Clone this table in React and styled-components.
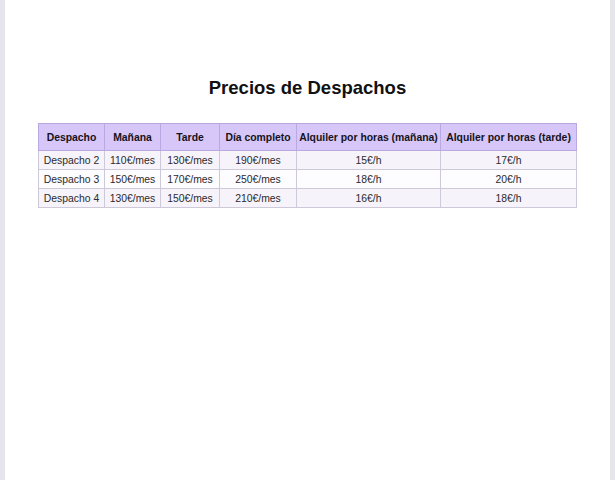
import { styled, createGlobalStyle } from "styled-components";

const GlobalStyle = createGlobalStyle`
  html, body {
    margin: 0;
    padding: 0;
    background: #ffffff;
  }
  body {
    font-family: "Liberation Sans", Arial, sans-serif;
  }
`;

const Frame = styled.div`
  width: 615px;
  height: 480px;
  box-sizing: border-box;
  display: flex;
  background: #e6e5ec;
  padding: 0 5px 0 5px;
`;

const Sheet = styled.div`
  flex: 1;
  background: #ffffff;
  display: flex;
  flex-direction: column;
  align-items: center;
  padding-top: 77px;
`;

const Title = styled.h1`
  margin: 0 0 24px;
  font-size: 18.5px;
  font-weight: 700;
  color: #111;
  line-height: 22px;
`;

const Table = styled.table`
  border-collapse: collapse;
  width: 538px;
  font-size: 10.4px;
  color: #2a2a30;
  table-layout: fixed;
`;

const Th = styled.th`
  background: #d7c6f8;
  font-weight: 700;
  color: #151320;
  height: 26px;
  padding: 0 2px;
  border: 1px solid #b9a9e0;
  text-align: center;
  white-space: nowrap;
`;

const Td = styled.td`
  height: 18px;
  padding: 0 2px;
  border: 1px solid #cdc9d8;
  text-align: center;
  white-space: nowrap;
  background: ${(p) => (p.$shade ? "#f6f4fa" : "#fdfcff")};
`;

const cols = [66, 56, 59, 77, 144, 136];
const heads = [
  "Despacho",
  "Mañana",
  "Tarde",
  "Día completo",
  "Alquiler por horas (mañana)",
  "Alquiler por horas (tarde)",
];
const rows = [
  ["Despacho 2", "110€/mes", "130€/mes", "190€/mes", "15€/h", "17€/h"],
  ["Despacho 3", "150€/mes", "170€/mes", "250€/mes", "18€/h", "20€/h"],
  ["Despacho 4", "130€/mes", "150€/mes", "210€/mes", "16€/h", "18€/h"],
];

export default function App() {
  return (
    <>
      <GlobalStyle />
      <Frame>
        <Sheet>
          <Title>Precios de Despachos</Title>
          <Table>
            <colgroup>
              {cols.map((w, i) => (
                <col key={i} style={{ width: w }} />
              ))}
            </colgroup>
            <thead>
              <tr>
                {heads.map((h) => (
                  <Th key={h}>{h}</Th>
                ))}
              </tr>
            </thead>
            <tbody>
              {rows.map((r, i) => (
                <tr key={r[0]}>
                  {r.map((c, j) => (
                    <Td key={j} $shade={i % 2 === 0}>
                      {c}
                    </Td>
                  ))}
                </tr>
              ))}
            </tbody>
          </Table>
        </Sheet>
      </Frame>
    </>
  );
}
